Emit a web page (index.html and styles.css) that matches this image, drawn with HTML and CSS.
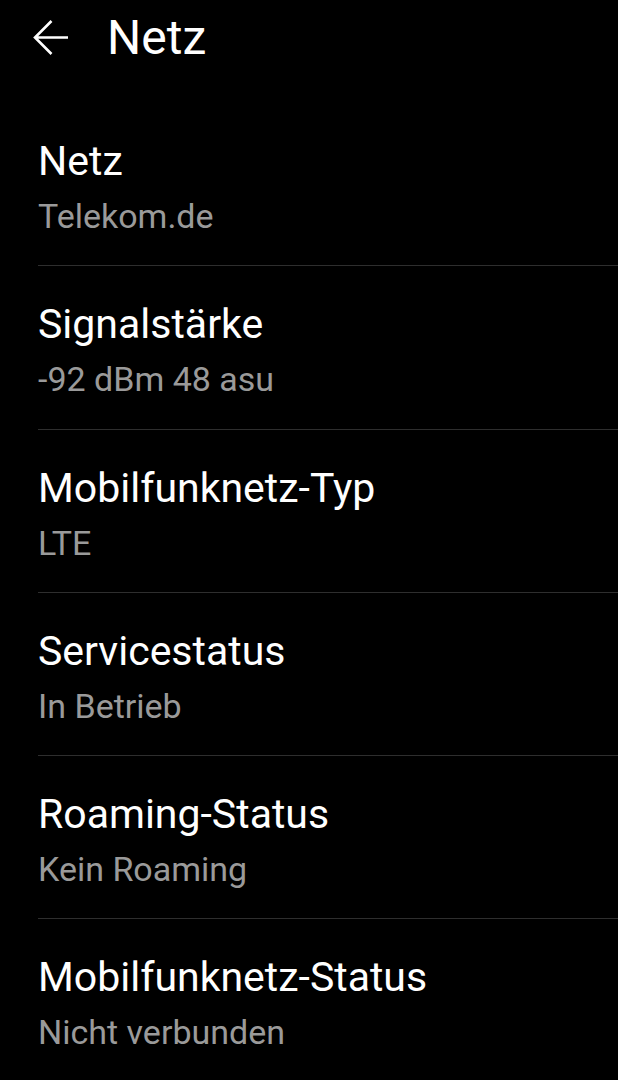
FILE: index.html
```html
<!DOCTYPE html>
<html lang="de">
<head>
<meta charset="utf-8">
<title>Netz</title>
<link rel="stylesheet" href="styles.css">
</head>
<body>
<header class="appbar">
  <svg class="back" width="40" height="40" viewBox="0 0 40 40" aria-hidden="true">
    <path d="M3 18.5 H36 M19.5 2 L3 18.5 L19.5 35" fill="none" stroke="#fff" stroke-width="2.6" stroke-linecap="butt" stroke-linejoin="miter"/>
  </svg>
  <h1 class="appbar-title">Netz</h1>
</header>
<ul class="list">
  <li class="item"><div class="item-title">Netz</div><div class="item-sub">Telekom.de</div></li>
  <li class="item"><div class="item-title">Signalstärke</div><div class="item-sub">-92 dBm 48 asu</div></li>
  <li class="item"><div class="item-title">Mobilfunknetz-Typ</div><div class="item-sub">LTE</div></li>
  <li class="item"><div class="item-title">Servicestatus</div><div class="item-sub">In Betrieb</div></li>
  <li class="item"><div class="item-title">Roaming-Status</div><div class="item-sub">Kein Roaming</div></li>
  <li class="item"><div class="item-title">Mobilfunknetz-Status</div><div class="item-sub">Nicht verbunden</div></li>
</ul>
</body>
</html>
```
FILE: styles.css
```css
html, body {
  margin: 0;
  padding: 0;
  background: #000;
  color: #fff;
  font-family: Roboto, "Noto Sans", sans-serif;
  overflow: hidden;
}
.appbar {
  display: flex;
  align-items: center;
  height: 103px;
  box-sizing: border-box;
  padding: 0 0 27px 32px;
}
.back {
  display: block;
  flex: none;
  margin-top: 2px;
}
.appbar-title {
  margin: 0 0 0 35px;
  font-size: 48px;
  font-weight: 400;
  line-height: 56px;
  color: #fff;
}
.list {
  list-style: none;
  margin: 0;
  padding: 0 0 0 38px;
}
.item {
  height: 163.25px;
  box-sizing: border-box;
  padding-top: 34px;
  border-bottom: 1px solid #2e2e2e;
}
.item:last-child {
  border-bottom: none;
}
.item-title {
  font-size: 41px;
  line-height: 48px;
  color: #fff;
  white-space: nowrap;
}
.item-sub {
  margin-top: 11px;
  font-size: 34px;
  line-height: 40px;
  color: #9a9a9a;
  white-space: nowrap;
}
```
